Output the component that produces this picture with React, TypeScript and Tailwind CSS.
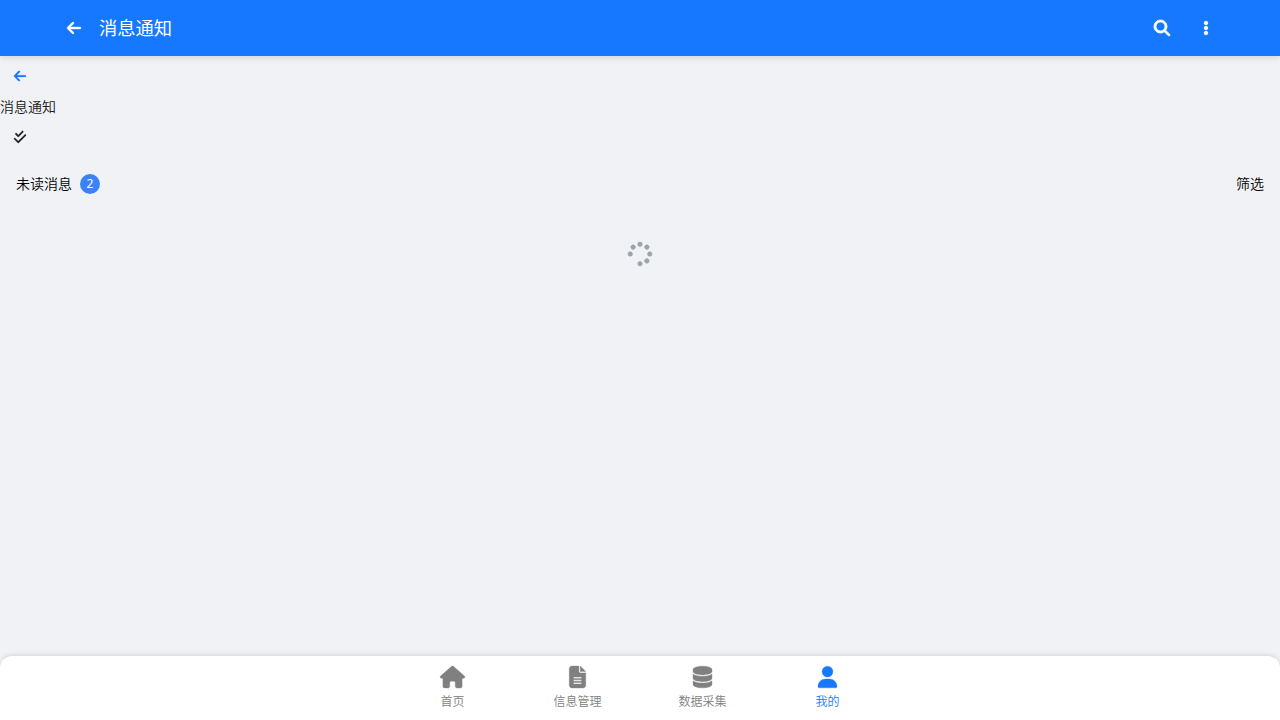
import React from "react";
import {
  FaArrowLeft,
  FaMagnifyingGlass,
  FaEllipsisVertical,
  FaCheckDouble,
  FaSpinner,
  FaHouse,
  FaFileLines,
  FaDatabase,
  FaUser,
} from "react-icons/fa6";

const tabs = [
  { label: "首页", icon: FaHouse, active: false, size: "h-[22px] w-[25px]" },
  { label: "信息管理", icon: FaFileLines, active: false, size: "h-[22px] w-[17px]" },
  { label: "数据采集", icon: FaDatabase, active: false, size: "h-[22px] w-[19px]" },
  { label: "我的", icon: FaUser, active: true, size: "h-[22px] w-[19px]" },
];

function TopBar() {
  return (
    <header className="z-10 h-14 shrink-0 bg-[#1677ff] text-white shadow-[0_2px_6px_rgba(0,0,0,0.12)]">
      <div className="mx-auto flex h-full max-w-[1200px] items-center px-4">
        <button className="flex size-9 items-center justify-center">
          <FaArrowLeft className="size-4 overflow-visible stroke-current stroke-[12]" />
        </button>
        <h1 className="-mt-0.5 ml-[7px] flex-1 text-[18.3px] leading-7 font-normal">消息通知</h1>
        <div className="flex gap-2">
          <button className="flex size-9 items-center justify-center">
            <FaMagnifyingGlass className="size-4 overflow-visible stroke-current stroke-[26]" />
          </button>
          <button className="flex size-9 items-center justify-center">
            <FaEllipsisVertical className="size-4 overflow-visible stroke-current stroke-[30]" />
          </button>
        </div>
      </div>
    </header>
  );
}

function TabBar() {
  return (
    <nav className="h-16 shrink-0 rounded-t-xl bg-white shadow-[0_-1px_5px_rgba(0,0,0,0.12)]">
      <div className="mx-auto grid h-full w-[500px] grid-cols-4">
        {tabs.map(({ label, icon: Icon, active, size }) => (
          <a
            key={label}
            className={
              active
                ? "flex flex-col items-center pt-[10px] text-[#1677ff]"
                : "flex flex-col items-center pt-[10px] text-[#808080]"
            }
          >
            <span className="flex h-[22px] items-center">
              <Icon className={`overflow-visible stroke-current stroke-[8] ${size}`} />
            </span>
            <span className="mt-1 text-xs leading-[18px]">{label}</span>
          </a>
        ))}
      </div>
    </nav>
  );
}

export default function App() {
  return (
    <div className="flex h-screen flex-col overflow-hidden bg-[#f0f2f5] font-['Noto_Sans_CJK_SC',sans-serif] text-sm font-[350] text-[#212121]">
      <TopBar />
      <main className="flex-1">
        <button className="flex size-10 items-center justify-center text-[#1677ff]">
          <FaArrowLeft className="size-[14px] overflow-visible stroke-current stroke-[8]" />
        </button>
        <div className="leading-[21px]">消息通知</div>
        <button className="flex size-10 items-center justify-center">
          <FaCheckDouble className="size-[14px] overflow-visible stroke-current stroke-[6]" />
        </button>
        <div className="flex h-[54px] items-center justify-between px-4">
          <div className="flex items-center gap-2">
            <span className="-mt-0.5 text-black">未读消息</span>
            <span className="flex size-5 items-center justify-center rounded-full bg-[#3b82f6] font-['Noto_Sans',sans-serif] text-xs font-normal text-white">
              2
            </span>
          </div>
          <button className="-mt-0.5 text-black">筛选</button>
        </div>
        <div className="flex justify-center pt-[31px]">
          <FaSpinner className="size-6 rotate-180 overflow-visible stroke-current stroke-[12] text-[#9ca3af]" />
        </div>
      </main>
      <TabBar />
    </div>
  );
}
